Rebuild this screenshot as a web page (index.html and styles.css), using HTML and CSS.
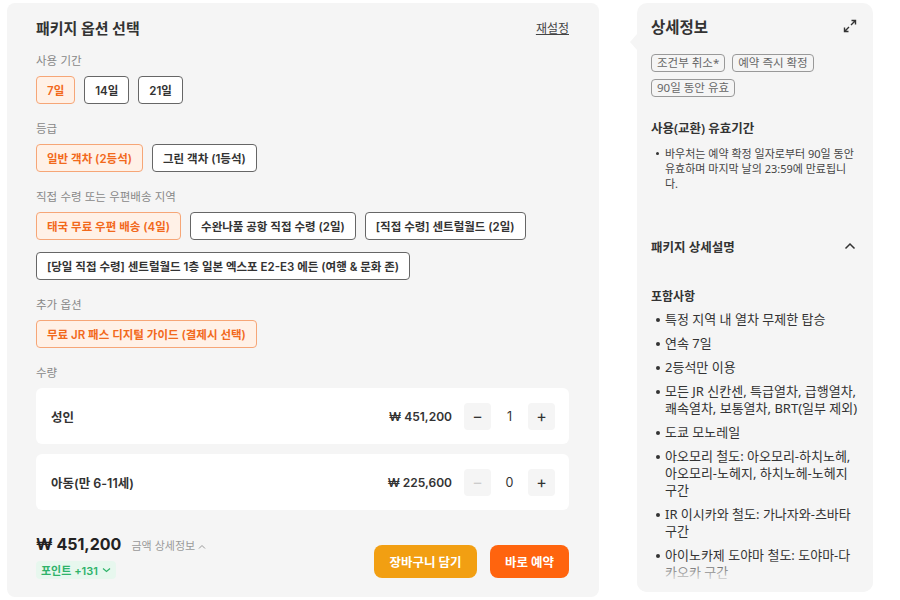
FILE: index.html
```html
<!DOCTYPE html>
<html lang="ko">

<head>
    <title>패키지 옵션 선택</title>
    <meta http-equiv="Content-Type" content="text/html; charset=UTF-8">
    <meta name="viewport" content="width=device-width, initial-scale=1.0">
    <link rel="stylesheet" href="styles.css">
</head>

<body>
    <div class='page'>
        <div class='options card'>
            <div class='options-head'>
                <h2>패키지 옵션 선택</h2>
                <a class='reset' href='#'>재설정</a>
            </div>

            <div class='group-title'>사용 기간</div>
            <div class='chips'>
                <span class='chip on'>7일</span>
                <span class='chip'>14일</span>
                <span class='chip'>21일</span>
            </div>

            <div class='group-title'>등급</div>
            <div class='chips'>
                <span class='chip on'>일반 객차 (2등석)</span>
                <span class='chip'>그린 객차 (1등석)</span>
            </div>

            <div class='group-title'>직접 수령 또는 우편배송 지역</div>
            <div class='chips'>
                <span class='chip on'>태국 무료 우편 배송 (4일)</span>
                <span class='chip'>수완나품 공항 직접 수령 (2일)</span>
                <span class='chip'>[직접 수령] 센트럴월드 (2일)</span>
                <span class='chip'>[당일 직접 수령] 센트럴월드 1층 일본 엑스포 E2-E3 에든 (여행 &amp; 문화 존)</span>
            </div>

            <div class='group-title'>추가 옵션</div>
            <div class='chips'>
                <span class='chip on'>무료 JR 패스 디지털 가이드 (결제시 선택)</span>
            </div>

            <div class='group-title'>수량</div>
            <div class='qty-row'>
                <span class='qty-name'>성인</span>
                <span class='qty-price'>₩ 451,200</span>
                <span class='qty-btn'>&minus;</span>
                <span class='qty-num'>1</span>
                <span class='qty-btn'>+</span>
            </div>
            <div class='qty-row'>
                <span class='qty-name'>아동(만 6-11세)</span>
                <span class='qty-price'>₩ 225,600</span>
                <span class='qty-btn off'>&minus;</span>
                <span class='qty-num'>0</span>
                <span class='qty-btn'>+</span>
            </div>

            <div class='total'>
                <div class='total-left'>
                    <div class='total-line'>
                        <span class='total-price'>₩ 451,200</span>
                        <span class='total-detail'>금액 상세정보 <svg width="8" height="6" viewBox="0 0 8 6"><path d="M1 4.5L4 1.5L7 4.5" fill="none" stroke="#999" stroke-width="1"/></svg></span>
                    </div>
                    <span class='points'>포인트 +131 <svg width="9" height="6" viewBox="0 0 9 6"><path d="M1 1.5L4.5 4.5L8 1.5" fill="none" stroke="#2fb36a" stroke-width="1.2"/></svg></span>
                </div>
                <div class='total-btns'>
                    <span class='btn btn-cart'>장바구니 담기</span>
                    <span class='btn btn-book'>바로 예약</span>
                </div>
            </div>
        </div>

        <div class='detail card'>
            <div class='detail-head'>
                <h2>상세정보</h2>
                <svg class='expand' width="14" height="14" viewBox="0 0 14 14">
                    <path d="M8.5 1.5H12.5V5.5M12.5 1.5L8 6M5.5 12.5H1.5V8.5M1.5 12.5L6 8" fill="none" stroke="#333" stroke-width="1.4"/>
                </svg>
            </div>
            <div class='tags'>
                <span class='tag'>조건부 취소*</span>
                <span class='tag'>예약 즉시 확정</span>
                <span class='tag'>90일 동안 유효</span>
            </div>

            <h3 class='sub'>사용(교환) 유효기간</h3>
            <ul class='dots small-list'>
                <li>바우처는 예약 확정 일자로부터 90일 동안 유효하며 마지막 날의 23:59에 만료됩니다.</li>
            </ul>

            <div class='fold-head'>
                <h3>패키지 상세설명</h3>
                <svg width="12" height="8" viewBox="0 0 12 8"><path d="M1.5 6.5L6 2L10.5 6.5" fill="none" stroke="#333" stroke-width="1.5"/></svg>
            </div>

            <h4 class='incl'>포함사항</h4>
            <ul class='dots incl-list'>
                <li>특정 지역 내 열차 무제한 탑승</li>
                <li>연속 7일</li>
                <li>2등석만 이용</li>
                <li>모든 JR 신칸센, 특급열차, 급행열차, 쾌속열차, 보통열차, BRT(일부 제외)</li>
                <li>도쿄 모노레일</li>
                <li>아오모리 철도: 아오모리-하치노헤, 아오모리-노헤지, 하치노헤-노헤지 구간</li>
                <li>IR 이시카와 철도: 가나자와-츠바타 구간</li>
                <li>아이노카제 도야마 철도: 도야마-다카오카 구간</li>
            </ul>
            <div class='fade'></div>
        </div>
    </div>
</body>

</html>
```

FILE: styles.css
```css
html,
body
{
    margin: 0;
    background-color: #fff;
    font-family: Inter, "Noto Sans CJK KR", sans-serif;
    color: #333;
}

.page
{
    display: flex;
    align-items: flex-start;
    gap: 38px;
    padding: 3px 0 0 7px;
}

.card
{
    background-color: #f5f5f5;
    box-sizing: border-box;
}

/* left: option picker */
.options
{
    width: 592px;
    height: 594px;
    border-radius: 8px;
    padding: 14px 30px 0 29px;
}

.options-head
{
    display: flex;
    justify-content: space-between;
    align-items: center;
    height: 20px;
}

.options-head h2
{
    margin: 0;
    font-size: 15px;
    font-weight: 700;
    color: #333;
}

.reset
{
    font-size: 12px;
    color: #444;
    text-decoration: underline;
    font-family: "Noto Sans CJK KR", sans-serif;
}

.group-title
{
    font-size: 11.5px;
    line-height: 16px;
    color: #888;
    margin: 16px 0 8px 0;
    font-family: "Noto Sans CJK KR", sans-serif;
}

.options-head + .group-title
{
    margin-top: 15px;
}

.chips
{
    display: flex;
    flex-wrap: wrap;
    gap: 12px 9px;
}

.chip
{
    display: inline-flex;
    align-items: center;
    box-sizing: border-box;
    height: 28px;
    padding: 0 10px;
    border: 1px solid #666;
    border-radius: 4px;
    background-color: #fff;
    font-size: 11.5px;
    font-weight: 600;
    color: #333;
}

.chip.on
{
    border-color: #f6a677;
    background-color: #fff1e7;
    color: #f2691c;
}

.qty-row
{
    display: flex;
    align-items: center;
    height: 56px;
    background-color: #fff;
    border-radius: 6px;
    padding: 0 14px 0 15px;
    margin-bottom: 10px;
}

.qty-name
{
    flex: 1;
    font-size: 12.5px;
    font-weight: 600;
}

.qty-price
{
    font-size: 12px;
    font-weight: 600;
    margin-right: 12px;
}

.qty-btn
{
    width: 27px;
    height: 27px;
    border-radius: 4px;
    background-color: #f5f5f5;
    display: flex;
    align-items: center;
    justify-content: center;
    font-size: 16px;
    color: #333;
}

.qty-btn.off
{
    color: #ccc;
}

.qty-num
{
    width: 37px;
    text-align: center;
    font-size: 12.5px;
}

.total
{
    display: flex;
    justify-content: space-between;
    align-items: flex-end;
    margin-top: 24px;
}

.total-line
{
    display: flex;
    align-items: baseline;
    gap: 10px;
}

.total-price
{
    font-size: 16px;
    font-weight: 700;
    color: #222;
}

.total-detail
{
    font-size: 11px;
    color: #999;
    font-family: "Noto Sans CJK KR", sans-serif;
}

.points
{
    display: inline-flex;
    align-items: center;
    gap: 4px;
    margin-top: 7px;
    height: 18px;
    padding: 0 5px;
    border-radius: 4px;
    background-color: #e7f7ee;
    color: #2fb36a;
    font-size: 11px;
    font-weight: 600;
}

.total-btns
{
    display: flex;
    gap: 13px;
    margin-bottom: 1px;
}

.btn
{
    display: inline-flex;
    align-items: center;
    justify-content: center;
    height: 33px;
    border-radius: 8px;
    color: #fff;
    font-size: 12.5px;
    font-weight: 700;
}

.btn-cart
{
    width: 103px;
    background-color: #f29f12;
}

.btn-book
{
    width: 79px;
    background-color: #ff640e;
}

/* right: detail panel */
.detail
{
    position: relative;
    width: 236px;
    height: 589px;
    border-radius: 10px;
    padding: 13px 15px 0 14px;
    font-family: "Noto Sans", "Noto Sans CJK KR", sans-serif;
}

.detail::before
{
    content: '';
    position: absolute;
    left: -7px;
    top: 31px;
    border-top: 8px solid transparent;
    border-bottom: 8px solid transparent;
    border-right: 7px solid #f5f5f5;
}

.detail-head
{
    display: flex;
    justify-content: space-between;
    align-items: center;
    height: 20px;
}

.detail-head h2
{
    margin: 0;
    font-size: 15.5px;
    font-weight: 700;
}

.expand
{
    margin-right: 1px;
}

.tags
{
    display: flex;
    flex-wrap: wrap;
    gap: 7px 7px;
    margin-top: 18px;
}

.tag
{
    box-sizing: border-box;
    height: 18px;
    line-height: 16px;
    padding: 0 5px;
    border: 1px solid #999;
    border-radius: 4px;
    font-size: 11.5px;
    color: #666;
}

.sub
{
    margin: 23px 0 0 0;
    font-size: 12.5px;
    line-height: 18px;
    font-weight: 600;
}

.dots
{
    list-style: none;
    padding: 0 0 0 14px;
}

.dots li
{
    position: relative;
}

.dots li::before
{
    content: '';
    position: absolute;
    left: -9px;
    top: 7px;
    width: 4px;
    height: 4px;
    border-radius: 50%;
    background-color: #333;
}

.small-list
{
    margin: 8px 0 0 0;
    font-size: 11px;
    line-height: 15px;
    color: #444;
}

.small-list li::before
{
    top: 6px;
    width: 3px;
    height: 3px;
}

.fold-head
{
    display: flex;
    justify-content: space-between;
    align-items: center;
    margin-top: 46px;
    height: 18px;
    padding-right: 2px;
}

.fold-head h3
{
    margin: 0;
    font-size: 12.5px;
    font-weight: 600;
}

.incl
{
    margin: 33px 0 0 0;
    font-size: 12px;
    line-height: 18px;
    font-weight: 600;
}

.incl-list
{
    margin: 5px 0 0 0;
    font-size: 13px;
    line-height: 17px;
    color: #333;
}

.incl-list li
{
    margin-bottom: 7px;
}

.fade
{
    position: absolute;
    left: 0;
    right: 0;
    bottom: 0;
    height: 34px;
    border-radius: 0 0 10px 10px;
    background: linear-gradient(rgba(245, 245, 245, 0), #f5f5f5 75%);
}
```
